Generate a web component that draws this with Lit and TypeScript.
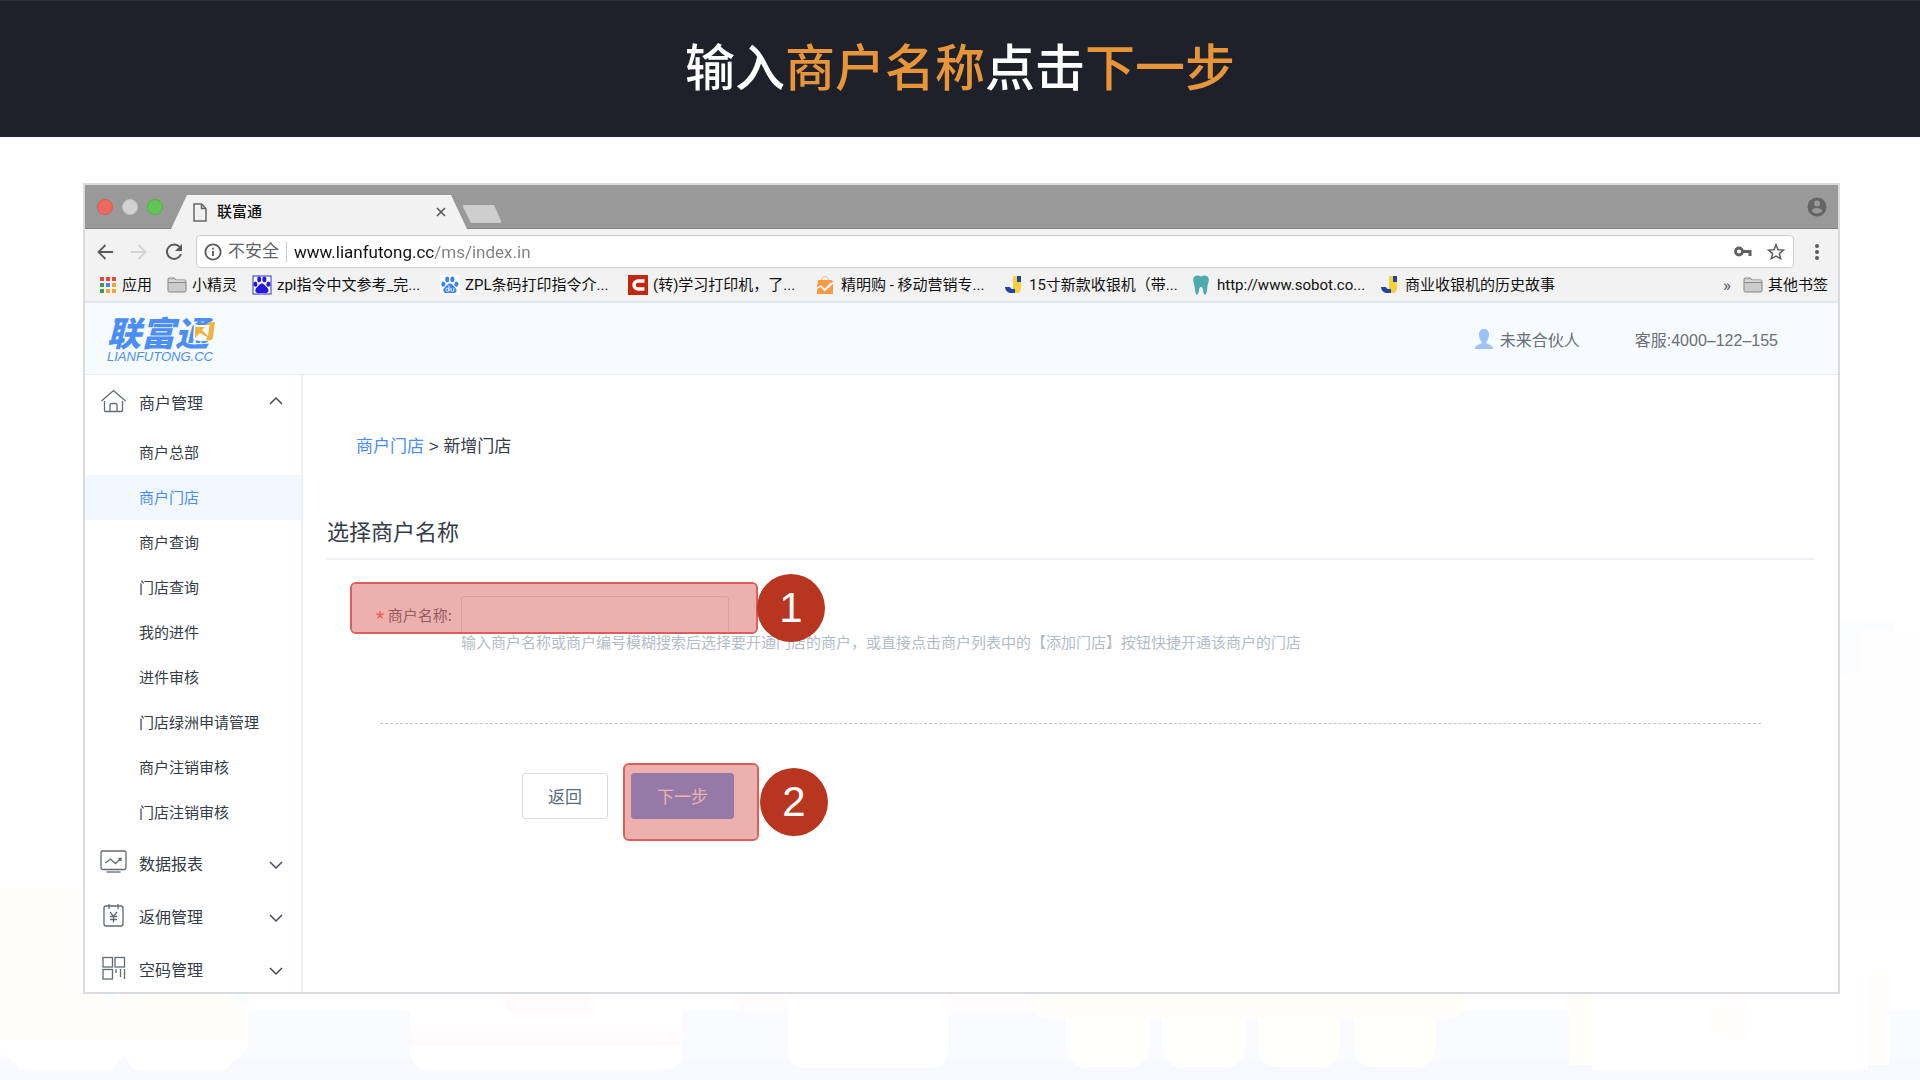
import { LitElement, html, svg, css } from "lit";
import { customElement } from "lit/decorators.js";
import { classMap } from "lit/directives/class-map.js";

const paw = svg`
  <ellipse cx="3.4" cy="9.2" rx="2" ry="2.6"/>
  <ellipse cx="7.2" cy="4.4" rx="2" ry="2.8"/>
  <ellipse cx="12.4" cy="4.4" rx="2" ry="2.8"/>
  <ellipse cx="16.4" cy="9.2" rx="2" ry="2.6"/>
  <path d="M9.9 8.4c2 0 2.7 1.5 3.9 2.8 1.6 1.6 3 2.6 2.7 4.6-.3 1.9-1.9 2.6-3.5 2.4-1.200-.1-1.900-.3-3.100-.3s-1.900.2-3.100.3c-1.600.2-3.200-.5-3.500-2.400-.3-2 1.100-3 2.700-4.600 1.200-1.300 1.900-2.800 3.900-2.800z"/>`;

const letterJ = svg`
  <path d="M9 1h4v13H9z" fill="#f7cf3a"/>
  <path d="M13 1h4v6h-4z" fill="#1d459f"/>
  <path d="M13 7h4v6c0 3-1.800 5-4 5h-3v-4h3z" fill="#f7cf3a"/>
  <path d="M1 12h5c.3 1.300 1.200 2 2.600 2H11v4H8c-4 0-6.600-2-7-6z" fill="#1d459f"/>`;

const folder = svg`
  <path d="M1 4.500a1.500 1.500 0 0 1 1.500-1.500h4.700l1.600 2h8.700A1.500 1.500 0 0 1 19 6.500v9a1.500 1.500 0 0 1-1.500 1.500h-15A1.500 1.500 0 0 1 1 15.500z" fill="#ccc" stroke="#858585"/>
  <path d="M1.500 7.500h17" stroke="#858585"/>
  <path d="M2 6h16" stroke="#e6e6e6"/>`;

const marks = {
  pawBox: svg`<rect x="1" y="1" width="18" height="18" fill="#fff" stroke="#2a2fc4"/><g fill="#2319dc">${paw}</g>`,
  pawDu: svg`<rect width="20" height="20" fill="#fff"/><g fill="#3b82f0">${paw}</g>
    <path d="M9 10.500v6M9 14.800a1.600 1.600 0 1 1 0-.1M11 12.800v2.200q0 1.500 1.400 1.500t1.400-1.500v-2.200" fill="none" stroke="#fff"/>`,
  cRed: svg`<rect width="20" height="20" fill="#c1260f"/>
    <path d="M16.500 6H10a4 4 0 0 0 0 8h6.500" fill="none" stroke="#fff" stroke-width="3.400"/>`,
  bag: svg`<path d="M2 5h14v1.500L8.500 13.500 5 10l-4 2.500zM1 14l3.800-2 3.700 4.500L17 9v10H1z" fill="#f39b45"/>
    <path d="M5.500 5c0-4.500 7-4.500 7 0" fill="none" stroke="#f3b97f"/>
    <path d="M18.500 5.500l-3 1-1 2z" fill="#f39b45"/>`,
  j: letterJ,
  tooth: svg`<path d="M1.500 3C3 0 6.500.2 9 1.500 11.500.2 15 0 16.500 3c1 2.500-.5 5-1 8-.5 3.500-.6 6.500-1.700 8.500-2 .8-2.300-1.500-2.600-3.500-.3-2.200-.6-4-2.200-4s-1.900 1.800-2.200 4c-.3 2-.6 4.300-2.600 3.500C3.100 17.500 3 14.500 2.500 11c-.5-3-2-5.500-1-8z" fill="#4dabb0"/>`,
};

const bookmarks = [
  { icon: marks.pawBox, text: "zpl指令中文参考_完..." },
  { icon: marks.pawDu, text: "ZPL条码打印指令介..." },
  { icon: marks.cRed, text: "(转)学习打印机，了..." },
  { icon: marks.bag, text: "精明购 - 移动营销专..." },
  { icon: marks.j, text: "15寸新款收银机（带..." },
  { icon: marks.tooth, text: "http://www.sobot.co..." },
  { icon: marks.j, text: "商业收银机的历史故事" },
];

const groupIcons = {
  home: svg`<path d="M1.500 13L13.500 2.500 25.500 13M4.500 13v9.500q0 1 1 1h16q1 0 1-1V13M10 23.500V17q0-1.500 1.500-1.500h4q1.500 0 1.500 1.500v6.500"/>`,
  chart: svg`<rect x="1" y="2" width="25" height="18.500" rx="1.500"/><path d="M6.500 23h14"/><path d="M5.500 14l5-4 5 4.500 5.500-5M18.500 9.500h2.500v2.500" />`,
  yen: svg`<rect x="4" y="4" width="19" height="20" rx="2"/><path d="M9 2v5M18 2v5M10 10l3.500 4.500L17 10M10 14.500h7M10 17.500h7M13.500 14.500v6"/>`,
  code: svg`<rect x="3" y="2.500" width="9.500" height="9.500"/><rect x="15" y="2.500" width="9.500" height="9.500"/><rect x="3" y="14.500" width="9.500" height="9.500"/><path d="M16 14v4M20.500 14v8M24.500 14v10"/>`,
};

const groups = [
  {
    icon: groupIcons.home,
    text: "商户管理",
    open: true,
    items: ["商户总部", "商户门店", "商户查询", "门店查询", "我的进件", "进件审核", "门店绿洲申请管理", "商户注销审核", "门店注销审核"],
  },
  { icon: groupIcons.chart, text: "数据报表", open: false, items: [] },
  { icon: groupIcons.yen, text: "返佣管理", open: false, items: [] },
  { icon: groupIcons.code, text: "空码管理", open: false, items: [] },
];

/** Faint street scene along the bottom of the slide. */
@customElement("slide-backdrop")
class SlideBackdrop extends LitElement {
  static styles = css`
    :host { display: block; }
    .scene { display: block; width: 100%; height: 100%; }
  `;
  render() {
    return html`<svg class="scene" viewBox="0 0 1920 1080" preserveAspectRatio="xMidYMax slice" aria-hidden="true">
      <path d="M0 888h248v153H0z" fill="#fffefa"/>
      <path d="M1840 630h80v290h-80z" fill="#fefefe"/>
      <path d="M1840 621h54v9h-54zM1840 630h20v40l-20 5z" fill="#fafcfe"/>
      <path d="M0 1011h1920v69H0z" fill="#f9fbff"/>
      <path d="M0 1060h1920v20H0z" fill="#f8f9ff"/>
      <path d="M0 1000h248v41q0 15-16 20l-6 9H134l-10-15-12 15H20l-10-12-10-4z" fill="#fff"/>
      <path d="M0 994h248v47H0z" fill="#fffefa"/>
      <path d="M100 994h16v8zM225 994h23v10q-12 0-23-10z" fill="#f9fdfe"/>
      <path d="M411 994h271v56q0 20-16 20H427q-16 0-16-20z" fill="#fff"/>
      <path d="M411 1031h271v15H411z" fill="#fffbfc"/>
      <path d="M507 994h84v19h-84zM730 994h58v18h-46z" fill="#fffbfc"/>
      <path d="M788 994h160v54q0 20-18 20H806q-18 0-18-20z" fill="#fff"/>
      <path d="M948 994h82v18h-82z" fill="#fffcfd"/>
      <path d="M1031 994h434q0 25-20 25H1051q-20 0-20-25z" fill="#fffefa"/>
      ${[1067, 1163, 1258, 1354].map(
        (x) => svg`<path transform="translate(${x} 1019)" d="M0 0h82v27q-2 21-20 21H20Q2 48 0 27z" fill="#fffffb"/>`,
      )}
      <path d="M1569 994h24v71h-24zM1868 973h21v92h-21z" fill="#fffefa"/>
      <path d="M1592 994h276v76h-276z" fill="#fff"/>
      <ellipse cx="1731" cy="1021" rx="21" ry="19" fill="#fffefd"/>
    </svg>`;
  }
}

@customElement("browser-chrome")
class BrowserChrome extends LitElement {
  static styles = css`
    :host { display: block; background: #f2f2f2; color: #111; }
    .strip { display: flex; align-items: flex-end; height: 44px; background: #999; box-shadow: inset 0 -1px #838383; }
    .lights { display: flex; gap: 9px; align-self: center; width: 74px; padding-left: 12px; }
    .light { width: 16px; height: 16px; border-radius: 50%; box-sizing: border-box; border: 1px solid; }
    .red { background: #ee6a5f; border-color: #dc5b51; }
    .grey { background: #d2d2d2; border-color: #c4c4c4; }
    .green { background: #60c554; border-color: #4fb444; }
    .tab { display: flex; align-items: center; box-sizing: border-box; width: 296px; height: 34px; padding: 0 21px 0 22px; gap: 10px;
      background: #f2f2f2; clip-path: polygon(16px 0, 280px 0, 100% 100%, 0 100%); font-size: 15px; font-weight: 500; }
    .tab-name { flex: 1; line-height: 20px; }
    .icon { display: block; fill: none; flex: none; }
    .plain { display: block; padding: 0; border: 0; background: none; font: inherit; color: inherit; }
    .new-tab { width: 40px; height: 18px; margin: 0 0 6px -5px; background: #cecece; clip-path: polygon(0 0, 32px 0, 100% 100%, 9px 100%); border-radius: 3px; }
    .person { align-self: center; margin-left: auto; padding-right: 11px; }
    .nav { display: flex; align-items: center; gap: 18px; padding: 6px 19px 0 12px; }
    .address { display: flex; align-items: center; flex: 1; box-sizing: border-box; height: 33px; margin: 0 3px 0 -5px; padding: 0 8px 0 7px;
      border: 1px solid #cfcfcf; border-radius: 4px; background: #fff; font-size: 17px; }
    .unsafe { color: #5f6368; padding: 0 7px 0 6px; border-right: 1px solid #ccc; line-height: 20px; }
    .url { flex: 1; min-width: 0; padding: 0 0 0 7px; border: 0; outline: 0; font-family: Roboto, "Noto Sans", sans-serif; font-size: 17px; line-height: 24px;
      color: transparent; background: linear-gradient(90deg, #111 147px, #808080 147px); -webkit-background-clip: text; background-clip: text; }
    .tools { display: flex; gap: 15px; }
    .marks { display: flex; align-items: center; height: 33px; padding: 0 10px 0 14px; border-bottom: 2px solid #e4e6e8;
      font-family: Roboto, "Noto Sans CJK SC", sans-serif; font-size: 15px; line-height: 20px; white-space: nowrap; }
    .mark { display: flex; align-items: center; gap: 5px; flex: none; color: #111; text-decoration: none; }
    .apps { width: 68px; }
    .short { width: 85px; }
    .long { width: 188px; }
    .more { margin-left: auto; padding-right: 12px; color: #555; font-size: 17px; }
  `;
  render() {
    return html`
      <div class="strip">
        <div class="lights"><span class="light red"></span><span class="light grey"></span><span class="light green"></span></div>
        <div class="tab">
          <svg class="icon" width="14" height="19" viewBox="0 0 14 19" stroke="#666" stroke-width="1.500"><path d="M1 1h7.500L13 5.500V18H1zM8.500 1v4.500H13"/></svg>
          <span class="tab-name">联富通</span>
          <button class="plain" aria-label="关闭标签页"><svg class="icon" width="10" height="10" viewBox="0 0 10 10" stroke="#555" stroke-width="1.500"><path d="M1 1l8 8M9 1L1 9"/></svg></button>
        </div>
        <button class="plain new-tab" aria-label="新标签页"></button>
        <button class="plain person" aria-label="用户">
          <svg class="icon" width="20" height="20" viewBox="0 0 20 20"><circle cx="10" cy="10" r="9.500" fill="#656565"/><circle cx="10" cy="6.500" r="3" fill="#999"/><path d="M4.500 14q1.200-3 5.500-3t5.500 3q-2 2.500-5.500 2.500T4.500 14z" fill="#999"/></svg>
        </button>
      </div>
      <div class="nav">
        <button class="plain" aria-label="后退"><svg class="icon" width="16" height="16" viewBox="0 0 16 16" stroke="#5a5a5a" stroke-width="1.800"><path d="M16 8H1.500M8.500 1l-7 7 7 7"/></svg></button>
        <button class="plain" aria-label="前进"><svg class="icon" width="16" height="16" viewBox="0 0 16 16" stroke="#d2d2d2" stroke-width="1.800"><path d="M0 8h14.500M7.500 1l7 7-7 7"/></svg></button>
        <button class="plain" aria-label="刷新"><svg class="icon" width="18" height="18" viewBox="0 0 18 18"><path d="M14.800 4.200A7.200 7.200 0 1 0 16 11" stroke="#5a5a5a" stroke-width="2"/><path d="M17 1v7h-7z" fill="#5a5a5a"/></svg></button>
        <div class="address">
          <svg class="icon" width="18" height="18" viewBox="0 0 18 18" stroke="#5a5a5a" stroke-width="1.800"><circle cx="9" cy="9" r="7.600"/><path d="M9 8v5M9 4.800v1.800"/></svg>
          <span class="unsafe">不安全</span>
          <input class="url" type="text" aria-label="地址" .value=${"www.lianfutong.cc/ms/index.in"} />
          <div class="tools">
            <svg class="icon" width="18" height="18" viewBox="0 0 18 18"><circle cx="5" cy="8.500" r="3.500" stroke="#5f5f5f" stroke-width="2.800"/><path d="M9 7h8.500v6h-3v-3H9z" fill="#5f5f5f"/></svg>
            <svg class="icon" width="18" height="18" viewBox="0 0 18 18" stroke="#5f5f5f" stroke-width="1.500"><path d="M9 1.700l2.100 5 5.400.4-4.100 3.500 1.300 5.200L9 13l-4.700 2.800 1.300-5.200L1.500 7.100l5.400-.4z"/></svg>
          </div>
        </div>
        <button class="plain" aria-label="菜单"><svg class="icon" width="4" height="18" viewBox="0 0 4 18"><g fill="#5a5a5a"><circle cx="2" cy="3" r="2"/><circle cx="2" cy="9" r="2"/><circle cx="2" cy="15" r="2"/></g></svg></button>
      </div>
      <nav class="marks">
        <a class="mark apps" href="#"><svg class="icon" width="18" height="18" viewBox="0 0 18 18">
          ${["#e8453c", "#e8453c", "#e8453c", "#3f9a58", "#4285f4", "#f0a830", "#3f9a58", "#f0a830", "#f0a830"].map(
            (c, i) => svg`<rect x=${1 + (i % 3) * 6} y=${1 + Math.floor(i / 3) * 6} width="4" height="4" fill=${c}/>`,
          )}</svg>应用</a>
        <a class="mark short" href="#"><svg class="icon" width="20" height="20" viewBox="0 0 20 20">${folder}</svg>小精灵</a>
        ${bookmarks.map(
          (b) => html`<a class="mark long" href="#"><svg class="icon" width="20" height="20" viewBox="0 0 20 20">${b.icon}</svg>${b.text}</a>`,
        )}
        <span class="more">»</span>
        <a class="mark" href="#"><svg class="icon" width="20" height="20" viewBox="0 0 20 20">${folder}</svg>其他书签</a>
      </nav>
    `;
  }
}

@customElement("side-menu")
class SideMenu extends LitElement {
  static styles = css`
    :host { display: block; background: #fff; color: #353c47; }
    .group { display: flex; align-items: center; width: 100%; height: 53px; box-sizing: border-box; padding: 0 18px 0 15px; border: 0;
      background: none; color: inherit; font: inherit; font-size: 16px; text-align: left; }
    .icon { flex: none; fill: none; stroke: #626a75; stroke-width: 1.300; margin-right: 12px; }
    .name { flex: 1; }
    .arrow { fill: none; stroke: #444b56; stroke-width: 1.500; }
    .list { list-style: none; margin: 0; padding: 2px 0 1px; }
    .link { display: block; padding-left: 54px; line-height: 45px; font-size: 15px; color: inherit; text-decoration: none; }
    .active { background: #f2f8ff; color: #4a8cf7; }
  `;
  render() {
    return groups.map(
      (g) => html`
        <button class="group" aria-expanded=${g.open}>
          <svg class="icon" width="27" height="27" viewBox="0 0 27 27">${g.icon}</svg>
          <span class="name">${g.text}</span>
          <svg class="arrow" width="14" height="14" viewBox="0 0 14 14"><path d=${g.open ? "M1 9l6-6 6 6" : "M1 6l6 6 6-6"} /></svg>
        </button>
        ${g.items.length
          ? html`<ul class="list">
              ${g.items.map((t) => html`<li><a class=${classMap({ link: true, active: t === "商户门店" })} href="#">${t}</a></li>`)}
            </ul>`
          : ""}
      `,
    );
  }
}

@customElement("store-form")
class StoreForm extends LitElement {
  static styles = css`
    :host { display: block; background: #fff; color: #353c47; padding: 59px 23px 0 24px; box-sizing: border-box; }
    .crumbs { padding-left: 29px; font-size: 17px; line-height: 26px; }
    .crumb-link { color: #4a8cf7; text-decoration: none; }
    .title { margin: 57px 0 0; padding-bottom: 9px; border-bottom: 2px solid #eff1f4; font-size: 22px; font-weight: 400; line-height: 32px; }
    .form { padding: 36px 54px 0 49px; }
    .field { position: relative; display: grid; grid-template-columns: 76px 268px; justify-content: start; column-gap: 9px; align-items: center; }
    .label { display: flex; align-items: center; gap: 4px; justify-self: end; font-family: "Noto Sans CJK SC", sans-serif; font-size: 15px; line-height: 38px; color: #4d545f; white-space: nowrap; }
    .star { width: 8px; height: 8px; fill: none; stroke: #f56c6c; stroke-width: 1.500; }
    .input { height: 38px; box-sizing: border-box; border: 1px solid #d5dae2; border-radius: 3px; background: #fff; font-size: 15px; }
    .hint { margin: 0 0 0 85px; font-size: 15px; line-height: 18px; color: #b4bcc8; }
    .rule { margin: 71px 0 49px 4px; border: 0; border-top: 1px dashed #c4c4c4; }
    .actions { position: relative; display: flex; gap: 23px; padding-left: 146px; }
    .button { box-sizing: border-box; height: 46px; padding: 0 25px 2px; border: 1px solid #d9dce0; border-radius: 3px; background: #fff; color: #5c6b7f; font: inherit; font-size: 17px; }
    .primary { background: #5191f3; border-color: #5191f3; color: #fff; }
    .callout { position: absolute; box-sizing: border-box; border: 2px solid #d95f58; border-radius: 6px; background: rgba(217, 99, 93, 0.5); background-clip: padding-box; pointer-events: none; }
    .field-callout { left: -26px; top: -14px; width: 408px; height: 52px; }
    .next-callout { left: 247px; top: -10px; width: 136px; height: 78px; }
    .badge { position: absolute; width: 68px; height: 68px; border-radius: 50%; background: #b8361f; color: #fff; text-align: center;
      font-family: "Liberation Sans", Arial, sans-serif; font-size: 42px; line-height: 68px; }
    .field-badge { left: 381px; top: -22px; }
    .next-badge { left: 384px; top: -5px; }
  `;
  render() {
    return html`
      <nav class="crumbs"><a class="crumb-link" href="#">商户门店</a> &gt; <span>新增门店</span></nav>
      <h2 class="title">选择商户名称</h2>
      <form class="form" @submit=${(e: Event) => e.preventDefault()}>
        <div class="field">
          <label class="label" for="merchant"><svg class="star" viewBox="0 0 8 8" aria-hidden="true"><path d="M4 4V0M4 4l3.800-1.200M4 4l2.400 3.200M4 4L1.600 7.200M4 4L.2 2.800"/></svg>商户名称:</label>
          <input class="input" id="merchant" type="text" required />
          <span class="callout field-callout"></span>
          <span class="badge field-badge">1</span>
        </div>
        <p class="hint">输入商户名称或商户编号模糊搜索后选择要开通门店的商户，或直接点击商户列表中的【添加门店】按钮快捷开通该商户的门店</p>
        <hr class="rule" />
        <div class="actions">
          <button class="button" type="button">返回</button>
          <button class="button primary" type="submit">下一步</button>
          <span class="callout next-callout"></span>
          <span class="badge next-badge">2</span>
        </div>
      </form>
    `;
  }
}

@customElement("app-root")
class AppRoot extends LitElement {
  static styles = css`
    :host { position: relative; display: flex; flex-direction: column; height: 100vh; overflow: hidden; background: #fff;
      font-family: "Liberation Sans", "Noto Sans CJK SC", sans-serif; }
    .backdrop { position: absolute; inset: 0; }
    .banner { position: relative; margin: 0; padding: 32px 0; border-top: 1px solid #2c2f39; background: #1f212a; color: #fff;
      font-size: 50px; font-weight: 500; line-height: 72px; text-align: center; }
    .accent { color: #e79538; }
    .window { position: relative; display: flex; flex-direction: column; flex: 1; min-height: 0; margin: 46px 80px 86px 83px;
      border: 2px solid #d9dbde; background: #fff; overflow: hidden; }
    .top { display: flex; align-items: center; box-sizing: border-box; height: 72px; flex: none; padding: 0 60px 0 22px; background: #f6fbff; border-bottom: 1px solid #e6eff6;
      font-size: 16px; color: #6a6f77; }
    .logo { position: relative; color: #4b8ef6; white-space: nowrap; margin-right: auto; }
    .logo-name { display: block; font-family: "Noto Sans CJK SC", sans-serif; font-style: italic; font-size: 34px; font-weight: 900; line-height: 36px; }
    .logo-latin { display: block; font-family: "Liberation Sans", Arial, sans-serif; font-style: italic; font-size: 13px; line-height: 14px; }
    .logo-arrow { position: absolute; left: 84px; top: 6px; }
    .user { display: flex; align-items: center; gap: 7px; margin-right: 55px; color: inherit; text-decoration: none; }
    .body { display: flex; flex: 1; min-height: 0; }
    .side { flex: none; width: 216px; border-right: 2px solid #eaf1f7; overflow: hidden; }
    .main { flex: 1; min-width: 0; }
  `;
  render() {
    return html`
      <slide-backdrop class="backdrop"></slide-backdrop>
      <h1 class="banner">输入<span class="accent">商户名称</span>点击<span class="accent">下一步</span></h1>
      <section class="window">
        <browser-chrome></browser-chrome>
        <header class="top">
          <div class="logo">
            <span class="logo-name">联富通</span>
            <span class="logo-latin">LIANFUTONG.CC</span>
            <svg class="logo-arrow" width="26" height="24" viewBox="0 0 26 24" aria-hidden="true">
              <path d="M3 5h12l9-4-2 20H8l-6-2z" fill="#f6fbff"/>
              <path d="M4 7h10l-3 3 6 6 1.500-11h-2.500l1-2.500L24 2l-2 15q-.5 3.500-4 3.500h-3l1-3.500-7-4-5 5z" fill="#edb440"/>
            </svg>
          </div>
          <a class="user" href="#"><svg width="18" height="20" viewBox="0 0 18 20" fill="#9cc2f8" aria-hidden="true"><path d="M9 0c3.200 0 5 2 5 5 0 3.500-1 6-2.500 7.500v2c2 1 6.500 1.500 6.500 5.500H0c0-4 4.500-4.500 6.500-5.500v-2C5 11 4 8.500 4 5c0-3 1.800-5 5-5z"/></svg>未来合伙人</a>
          <span>客服:4000–122–155</span>
        </header>
        <div class="body">
          <side-menu class="side"></side-menu>
          <store-form class="main"></store-form>
        </div>
      </section>
    `;
  }
}
